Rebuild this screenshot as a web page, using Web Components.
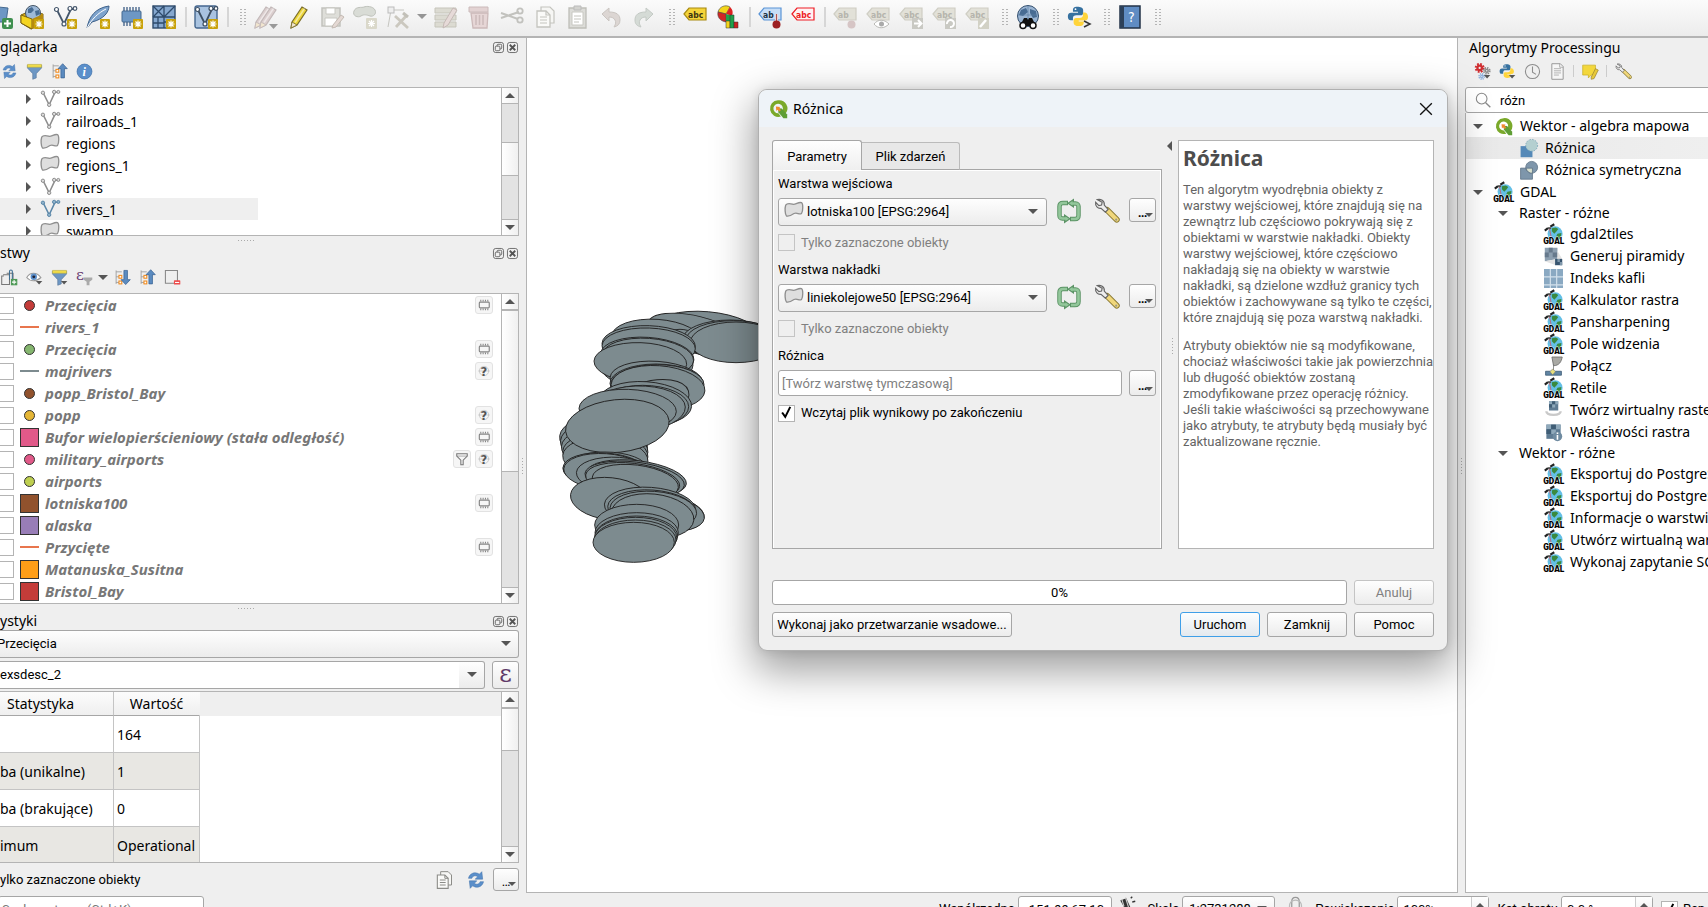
<!DOCTYPE html>
<html lang="pl">
<head>
<meta charset="utf-8">
<title>QGIS</title>
<style>
  :root {
    --ui: Roboto, "DejaVu Sans Condensed", sans-serif;
    --tree: "Noto Sans", "Open Sans", sans-serif;
    --face: #efefef;
    --line: #b4b4b4;
    --edge: #a6a6a6;
  }
  body { margin: 0; height: 100vh; overflow: hidden; background: var(--face); color: #000; font: 13px/16px var(--ui); }
</style>
</head>
<body>
<qgis-window></qgis-window>
<script>
const BASE = `
  *, *::before, *::after { box-sizing: border-box; }
  button, input, select { font: inherit; color: inherit; margin: 0; }
  button { padding: 0; border: 0; background: none; display: inline-flex; align-items: center; justify-content: center; }
  .push { border: 1px solid var(--edge); border-radius: 3px; background: linear-gradient(#fefefe, #ececec); }
  select { appearance: none; width: 100%; height: 28px; border: 1px solid var(--edge); border-radius: 3px; background: linear-gradient(#fefefe, #ececec); padding: 0 6px; }
  input[type=text], input[type=search] { border: 1px solid var(--edge); border-radius: 3px; background: #fff; padding: 0 3px; outline: 0; min-width: 0; }
  input[type=checkbox] { appearance: none; flex: none; width: 17px; height: 17px; border: 1px solid #b4b4b4; background: #fff; }
  .combo { position: relative; display: block; }
  .combo > .arrow { position: absolute; right: 8px; top: 50%; margin-top: -3px; }
  .arrow { width: 0; height: 0; border: 5px solid transparent; border-top-color: #555; border-bottom: 0; pointer-events: none; }
`;

function define(tag, css, html) {
  customElements.define(tag, class extends HTMLElement {
    connectedCallback() {
      if (this.shadowRoot) return;
      const root = this.attachShadow({ mode: 'open' });
      root.innerHTML = `<style>${BASE}${css}</style>` + (typeof html === 'function' ? html(this) : html);
    }
  });
}

/* ---------- icons, all on a 24 × 24 grid ---------- */
const star = (c = '#c9a20a') => `<rect x="14" y="14" width="10" height="10" rx="1" fill="${c}"/><path d="M19 15.500v7M15.500 19h7M16.500 16.500l5 5M21.500 16.500l-5 5" stroke="#fff" stroke-width="1.200"/>`;
const vee = (c, f = '#fff') => `<path d="M4 5l7 14 7-15h5" fill="none" stroke="${c}" stroke-width="1.800"/><g fill="${f}" stroke="${c}" stroke-width="1.200"><circle cx="3.500" cy="4.500" r="2"/><circle cx="11" cy="19" r="2"/><circle cx="17" cy="3.500" r="2"/><circle cx="22" cy="3.500" r="1.800"/></g>`;
const tag = (t, f, s, c, x = 5) => `<path d="M1 9l5-6h17v12H6z" fill="${f}" stroke="${s}" stroke-width="1.200"/><text x="${x}" y="12.500" font-family="DejaVu Sans Condensed, sans-serif" font-size="8.500" font-weight="700" fill="${c}">${t}</text>`;
const chip = c => `<rect x="4" y="7" width="17" height="10" rx="1.500" fill="none" stroke="${c}" stroke-width="2"/><path d="M6.500 3v3M10.500 3v3M14.500 3v3M18.500 3v3M6.500 18v3M10.500 18v3M14.500 18v3M18.500 18v3" stroke="${c}" stroke-width="1.800"/>`;
const drop = '<path d="M14 17h9l-4.500 5z" fill="#555"/>';
const python = '<path d="M12 2c-4 0-5 1.500-5 4v2h6v1H5c-3 0-4 2-4 4.500S2 18 4.500 18H7v-2.500C7 13 8.500 12 11 12h5c2 0 3-1 3-3V6c0-3-3-4-7-4z" transform="scale(.85)" fill="#3671a0"/><path d="M18.500 7H17v3c0 2.500-1.500 3.500-4 3.500H9c-2 0-3 1-3 3V19c0 2.500 2.500 4 6 4s6-1 6-4v-1.500h-6v-1h7.500c2.500 0 3.500-2 3.500-4.500S21.500 7 18.500 7z" transform="translate(1.500 1.500) scale(.85)" fill="#ffd43b"/><circle cx="8.500" cy="4.200" r=".9" fill="#fff"/>';
const wrench = (c = '#f0d77b') => `<path d="M12 11l9 9" stroke="#8b7b35" stroke-width="5.500" stroke-linecap="round"/><path d="M12.500 11.500l8.500 8.500" stroke="${c}" stroke-width="3.800" stroke-linecap="round"/><path d="M3 1.500c3-1 7 1 6.500 5l3.500 4-2.500 2.500-4-3.500C3.500 10 1 7.500 1.500 4l3 3 2.500-.5.500-2.500z" fill="#eee" stroke="#666" stroke-width="1.100"/><circle cx="20.500" cy="20" r="1" fill="#998"/>`;
const qlogo = '<path d="M12 1.500a10 10 0 1 0 3.500 19.500l-3-4A5.700 5.700 0 1 1 17.200 14l4 3.500A10 10 0 0 0 12 1.500z" fill="#7aa92a"/><path d="M12 11l4.500.5 6.500 7v4.500h-4.500l-6-7z" fill="#5f9e35"/><path d="M9.500 9l5 .5-1 1.500 2 2.500-2 1.500-2-2-1.500 1.500z" fill="#f08a2c"/>';
const gdal = '<circle cx="14" cy="11" r="9.500" fill="#63bfe6"/><path d="M10 4l5-1 3 2-2 3-3 3-3-3zM17 11l5-1-1 7-4 2-2-4z" fill="#3a8a3f"/><path d="M1 7l4-3M8 2l5-3" stroke="#222" stroke-width="2.800"/><path d="M5 4l4 0" stroke="#555" stroke-width="2.500"/><path d="M7 5l2 10" stroke="#c56" stroke-width="1"/><text x="-1" y="23.500" font-family="Roboto, sans-serif" font-size="10.500" font-weight="900" fill="#000" stroke="#fff" stroke-width="1" paint-order="stroke">GDAL</text>';
const refresh = '<path d="M3 10c1-5 6-8 11-6l2 1 3-3 1 9h-9l3-3c-3-2-6-1-7 2z" fill="#5b8fca" stroke="#3c6ea8" stroke-width=".6"/><path d="M21 14c-1 5-6 8-11 6l-2-1-3 3-1-9h9l-3 3c3 2 6 1 7-2z" fill="#5b8fca" stroke="#3c6ea8" stroke-width=".6"/>';
const funnel = (b = '#6d97c4') => `<path d="M2 3h20v4l-7.500 8v6l-5 2v-8L2 7z" fill="${b}" stroke="#4f6f94" stroke-width=".8"/><path d="M2 2h20v4H2z" fill="#f0dc4a" stroke="#b9a62d" stroke-width=".6"/>`;
const treeArrow = up => `<path d="M3 2v19M3 4h8M3 11h4M3 19h4" stroke="#999" stroke-width="1.200" fill="none"/><rect x="7" y="9" width="4" height="4" fill="#fff" stroke="#f08a1c" stroke-width="1.500"/><rect x="7" y="17" width="4" height="4" fill="#fff" stroke="#f08a1c" stroke-width="1.500"/>` + (up ? '<path d="M16.500 1l6.500 7h-4v13h-5V8h-4z" fill="#5b8bc0" stroke="#355f90"/>' : '<path d="M16.500 22l6.500-7h-4V2h-5v13h-4z" fill="#5b8bc0" stroke="#355f90"/>');
const page = c => `<path d="M8 2h9l4 4v12H8z" fill="#f6f6f4" stroke="${c}" stroke-width="1.200"/><path d="M4 6h9l4 4v12H4z" fill="#fafaf8" stroke="${c}" stroke-width="1.300"/><path d="M7 12h7M7 15h7M7 18h7M13 6v4h4" stroke="${c}" fill="none" stroke-width="1.200"/>`;
const gear = (x, y, r, c) => `<circle cx="${x}" cy="${y}" r="${r + 1.5}" fill="none" stroke="${c}" stroke-width="3" stroke-dasharray="${((r + 1.5) * .45).toFixed(2)} ${((r + 1.5) * .335).toFixed(2)}"/><circle cx="${x}" cy="${y}" r="${r * .8}" fill="none" stroke="${c}" stroke-width="${r * .8}"/>`;
const pencil = (f, s, dx = 0) => `<g transform="translate(${dx} 0)"><path d="M5 17L15 2l5 3-10 15-6 3z" fill="${f}" stroke="${s}" stroke-width="1.200"/><path d="M5 17l5 3-6 3z" fill="#f2e6cf" stroke="${s}" stroke-width=".8"/><path d="M8 17.500L17.500 3.500" stroke="#fff" stroke-opacity=".5" stroke-width="1.500"/></g>`;
const polygon = (f, s) => `<path d="M2 5c2-3 5-2 9-1 4 0 6-3 10-2 2 1 2 10 0 13-3 2-5-2-9 0-3 2-6 4-9 3-2-2-2-10-1-13z" fill="${f}" stroke="${s}" stroke-width="1.600"/>`;
const pixels = '<path d="M2 2h18v18H2z" fill="#5e7b93"/><path d="M2 2h6v6H2zM14 2h6v6h-6zM8 8h6v6H8z" fill="#8fa9bb"/><path d="M8 2h6v6H8zM2 8h6v6H2z" fill="#3f5d75"/>';

const ICONS = {
  addlayer: '<path d="M0 1l19 2-2 14H0z" fill="#6d97c4" stroke="#44698f"/><rect x="13" y="13" width="11" height="11" rx="2" fill="#3f8f4f"/><path d="M18.500 15v7M15 18.500h7" stroke="#fff" stroke-width="2"/>',
  package: '<path d="M1 10l9-4 13 3v10l-12 5-10-6z" fill="#d9ab18" stroke="#7c6412"/><circle cx="13" cy="8" r="7.500" fill="#9db9d8" stroke="#456"/><path d="M8 4l4-2 2 3-3 3-3 0zM15 6l4-1 1 4-4 2z" fill="#486c93"/><path d="M1 10l11 4v10l-11-6z" fill="#f4d420" stroke="#7c6412"/><path d="M12 14l11-5v10l-11 5z" fill="#b68b10"/>' + star(),
  newvector: vee('#44566b') + star(),
  feather: '<path d="M1 23C3 12 9 3 23 1c0 6-5 13-17 16z" fill="#7ea3cc" stroke="#3e618a"/><path d="M1 23C6 14 12 8 20 4" stroke="#fff" fill="none"/>' + star(),
  newchip: '<rect x="3" y="6" width="19" height="11" rx="1" fill="#6d97c4" stroke="#44698f"/><path d="M5 2v4M8 2v4M11 2v4M14 2v4M17 2v4M20 2v4M5 17v4M8 17v4M11 17v4" stroke="#3c5d85" stroke-width="1.300"/>' + star(),
  newgrid: '<rect x="1" y="1" width="22" height="22" fill="#86a8cf" stroke="#2e4a6b" stroke-width="1.400"/><path d="M12 1v22M1 12h22M1 1l11 11M12 12L23 1M1 12L12 1M6 12v11M1 18h11M12 17h11" stroke="#2e4a6b" stroke-width="1.300"/>' + star(),
  vectortool: '<rect x="1" y="1" width="22" height="22" rx="2" fill="#a9c3e0" stroke="#44668e" stroke-width="1.400"/>' + vee('#3d4f63') + star(),
  pencils: pencil('#dccfcf', '#c3b9b9', -3) + pencil('#dccfcf', '#c3b9b9', 2) + '<path d="M15 19h9l-4.500 5z" fill="#999"/>',
  pencil: pencil('#ecd536', '#7a6d2a'),
  save: '<path d="M2 3h18v18H2z" fill="#deded9" stroke="#c2c2bd" stroke-width="1.500"/><path d="M6 3h9v6H6zM5 13h12v8H5z" fill="#fff" stroke="#c8c8c2"/><path d="M13 20l8-10 3 2-8 10-4 1z" fill="#e4d9d4" stroke="#c3bab3"/>',
  addblob: '<path d="M1 6c2-5 8-3 10-4s9-1 11 3-2 7-5 6-6-2-9 0-9 0-7-5z" fill="#d9dcd6" stroke="#bfc2bb"/><rect x="13" y="13" width="11" height="11" rx="1" fill="#dad8ca"/><path d="M18.500 15v7M15 18.500h7M16 16l5 5M21 16l-5 5" stroke="#fff" stroke-width="1.200"/>',
  vertex: '<path d="M5 5L2 22M5 5h13" stroke="#c5c5c0"/><rect x="2" y="2" width="6" height="6" fill="#eee" stroke="#bbb"/><path d="M10 22l11-12M9 11l13 12" stroke="#cbc8bf" stroke-width="2.800"/><path d="M17 8l5 4" stroke="#c2c0b8" stroke-width="3"/>',
  table: '<path d="M1 3h21v5H1zM1 10h21v5H1zM1 17h21v5H1z" fill="#dcdbd2" stroke="#c6c5bb"/><path d="M10 18l9-15 4 2-9 15-5 3z" fill="#e6dad8" stroke="#c5b9b6"/>',
  trash: '<path d="M2 2h19v5H2z" fill="#e3d3d3" stroke="#cbbaba"/><path d="M4 8h17l-1 15H6z" fill="#e6d6d6" stroke="#ccb9b9" stroke-width="1.300"/><path d="M9 10v10M12.500 10v10M16 10v10" stroke="#cbb" stroke-width="1.500"/>',
  scissors: '<path d="M1 8l17 6M1 13l18-6" stroke="#c2c2be" stroke-width="2"/><circle cx="20" cy="6" r="2.700" fill="none" stroke="#c2c2be" stroke-width="1.800"/><circle cx="20" cy="15" r="2.700" fill="none" stroke="#c2c2be" stroke-width="1.800"/>',
  copy: page('#c4c4be'), copydark: page('#8c8c88'),
  paste: '<path d="M3 3h17v20H3z" fill="#dcdcd8" stroke="#bebeb8" stroke-width="1.300"/><path d="M6 7h11v13H6z" fill="#fff" stroke="#c8c8c2"/><path d="M8 1h7v4H8z" fill="#d3d3cf" stroke="#bbb"/><path d="M8 11h7M8 14h7M8 17h5" stroke="#c4c4be"/>',
  undo: '<path d="M3 9l7-6v4c8 0 11 3 11 8 0 4-2 6-6 7 2-3 2-5 1-7s-3-3-6-3v4z" fill="#dcd6d3" stroke="#cac5c1"/>',
  redo: '<path d="M21 9l-7-6v4C6 7 3 10 3 15c0 4 2 6 6 7-2-3-2-5-1-7s3-3 6-3v4z" fill="#d5dbd6" stroke="#c4cac5"/>',
  abc: tag('abc', '#f4d43a', '#a88a10', '#3b3410'),
  chart: '<path d="M10 9L2 7a8 8 0 0 1 12-5z" fill="#f3d51b" stroke="#444" stroke-width=".6"/><path d="M10 9l4-7a8 8 0 0 1 2 9z" fill="#dd2222"/><path d="M10 9l-8-2c-1 5 2 9 8 10z" fill="#cf2626" stroke="#444" stroke-width=".6"/><path d="M10 9l7 2-2 5-5 1z" fill="#1ea04a"/><path d="M10 16h4v7h-4z" fill="#f3d51b" stroke="#333" stroke-width=".5"/><path d="M14 10h4v13h-4z" fill="#1ea04a" stroke="#333" stroke-width=".5"/><path d="M18 17h4v6h-4z" fill="#c22" stroke="#333" stroke-width=".5"/>',
  abpin: tag('ab', '#c7def7', '#5a94d6', '#234') + '<path d="M18.500 9v8" stroke="#fff" stroke-width="3"/><path d="M18.500 9v8" stroke="#a55" stroke-width="1.500"/><circle cx="18.500" cy="19.500" r="4" fill="#9c1f22"/>',
  abcred: tag('abc', '#fff2f2', '#ee1c24', '#ee1c24'),
  g1: tag('ab', '#e2e1d8', '#cfcec4', '#b5b4ac') + '<circle cx="18.500" cy="19.500" r="4" fill="#d6c5c5"/>',
  g2: tag('abc', '#e2e1d8', '#cfcec4', '#b5b4ac') + '<path d="M8 19c4-5 10-5 15 0-5 5-11 5-15 0z" fill="#fff" stroke="#b9b9b5"/><circle cx="15.500" cy="19" r="2.500" fill="#aaa"/>',
  g3: tag('abc', '#e2e1d8', '#cfcec4', '#b5b4ac') + '<rect x="13" y="13" width="11" height="11" fill="#c9c9c3"/><path d="M15 18.500h7M19 15l3.500 3.500L19 22" stroke="#fff" stroke-width="2" fill="none"/>',
  g4: tag('abc', '#e2e1d8', '#cfcec4', '#b5b4ac') + '<rect x="13" y="13" width="11" height="11" fill="#c9c9c3"/><path d="M18 22a3.500 3.500 0 1 0-3-3" stroke="#fff" stroke-width="2" fill="none"/>',
  g5: tag('abc', '#e2e1d8', '#cfcec4', '#b5b4ac') + '<rect x="13" y="13" width="11" height="11" fill="#d2d1c5"/><path d="M15 22l6-7" stroke="#fff" stroke-width="2.500"/>',
  globe: '<circle cx="12" cy="11" r="10.500" fill="#9ab5d3" stroke="#34506f"/><path d="M5 5l5-2 2 4-5 4-4-1zM14 4l6 2 1 6-4 1-3-5z" fill="#486c93"/><path d="M2 10h20M12 1v20" stroke="#5c7ea5" stroke-width=".7"/><path d="M8 13h3l1 2 1-2h3l4 8H4z" fill="#111"/><circle cx="7" cy="20.500" r="3" fill="#fff" stroke="#111" stroke-width="1.500"/><circle cx="17" cy="20.500" r="3" fill="#fff" stroke="#111" stroke-width="1.500"/>',
  python: python + '<path d="M17 16l6 3-6 3" fill="none" stroke="#333" stroke-width="1.500"/>',
  pydrop: python + drop,
  book: '<path d="M2 1h20v22H2z" fill="#5f8cc3" stroke="#223247" stroke-width="1.500"/><path d="M2 1h4v22H2z" fill="#2c4059"/><text x="10" y="17" font-family="DejaVu Sans Condensed, sans-serif" font-size="14" fill="#fff">?</text>',
  refresh, funnel: funnel(), collapse: treeArrow(true), expand: treeArrow(false),
  info: '<circle cx="12" cy="12" r="10.500" fill="#5b8fca" stroke="#3c6ea8"/><text x="9" y="18" font-family="Liberation Serif, serif" font-style="italic" font-weight="700" font-size="17" fill="#fff">i</text>',
  vector: vee('#8d8d8d', '#ddd'), vectorblue: vee('#5b87a8', '#8fb3cc'),
  polygon: polygon('#dedede', '#8f8f8f'),
  addgroup: '<path d="M3 8h9v14H1V10h3M8 6h9v13" fill="none" stroke="#777" stroke-width="1.500"/><path d="M12 15V3c0-2 4-2 4 0v12" fill="none" stroke="#3f6f93" stroke-width="1.500"/><rect x="14" y="14" width="9" height="9" fill="#4f9a57"/><path d="M18.500 15.500v6M15.500 18.500h6" stroke="#fff" stroke-width="1.500"/>',
  eye: '<path d="M1 12C6 4 15 4 21 12 15 18 6 18 1 12z" fill="#fff" stroke="#999" stroke-width="1.500"/><circle cx="11" cy="11" r="4.500" fill="#5b8fca"/><circle cx="11" cy="11" r="2" fill="#223"/>' + drop,
  funneldrop: funnel() + drop,
  epsfilter: '<text x="0" y="15" font-family="DejaVu Serif, Liberation Serif, serif" font-size="22" fill="#6a3f74">ε</text><path d="M11 12h12v3l-4 3v5h-4v-5l-4-3z" fill="#aaa"/>',
  removebox: '<path d="M2 2h17v18H2z" fill="none" stroke="#888" stroke-width="1.500"/><rect x="14" y="16" width="9" height="6" rx="1" fill="#ee4b4b"/><path d="M15.500 19h6" stroke="#fff" stroke-width="1.500"/>',
  epsilon: '<text x="4" y="20" font-family="DejaVu Serif, Liberation Serif, serif" font-size="29" fill="#5f3a68">ε</text>',
  chip: chip('#858585'),
  query: '<circle cx="12" cy="12" r="8" fill="none" stroke="#bbb" stroke-width="1.200"/><path d="M2 12h20" stroke="#bbb"/><text x="6" y="20" font-family="DejaVu Sans, sans-serif" font-weight="700" font-size="20" fill="#555">?</text>',
  funnelline: '<path d="M3 3h18v4l-7 7v8h-4v-8L3 7z" fill="none" stroke="#777" stroke-width="1.800"/><path d="M3 7h18" stroke="#777"/>',
  float: '<rect x="1" y="1" width="22" height="22" rx="5" fill="none" stroke="#666" stroke-width="2"/><rect x="9" y="5" width="10" height="10" rx="2" fill="none" stroke="#666" stroke-width="2"/><rect x="5" y="9" width="10" height="10" rx="2" fill="#efefef" stroke="#666" stroke-width="2"/>',
  closebox: '<rect x="1" y="1" width="22" height="22" rx="5" fill="none" stroke="#666" stroke-width="2"/><path d="M6 6l12 12M18 6L6 18" stroke="#555" stroke-width="4"/>',
  qlogo, gdal, wrench: wrench(),
  iterate: '<path d="M11 4H6C3.500 4 2.500 5 2.500 7.500v9c0 1.500 1 3 3 3h2" fill="none" stroke="#5c9466" stroke-width="4.500"/><path d="M13 20h5c2.500 0 3.500-1 3.500-3.500v-9c0-1.500-1-3-3-3h-2" fill="none" stroke="#5c9466" stroke-width="4.500"/><path d="M7 15l7 4.700-7 4.800zM17-.5v9.500l-7-4.700z" fill="#5c9466"/><path d="M10 4H6C3.500 4 2.500 5 2.500 7.500v9c0 1.500 1 3 3 3h4M14 20h4c2.500 0 3.500-1 3.500-3.500v-9c0-1.500-1-3-3-3h-4" fill="none" stroke="#93c79b" stroke-width="2.600"/><path d="M8.500 17.500l3.500 2.200-3.500 2.300zM15.500 2v4.500L12 4.300z" fill="#93c79b"/>',
  gears: gear(8, 7, 4, '#cf2e31') + gear(18, 11, 2.5, '#8a8a8a') + gear(11, 19, 2, '#8fb0dc') + drop,
  clock: '<circle cx="12" cy="12" r="10" fill="none" stroke="#8c8c8c" stroke-width="1.500"/><path d="M12 5v8l5 3" fill="none" stroke="#8c8c8c" stroke-width="1.500"/>',
  doc: '<path d="M4 1h12l4 4v18H4z" fill="#f6f6f6" stroke="#999" stroke-width="1.400"/><path d="M7 8h10M7 11h10M7 14h10M7 17h7M15 1v5h5" stroke="#999" fill="none"/>',
  note: '<path d="M1 3h18v14h-6l-4 4v-4H1z" fill="#f3d73c" stroke="#c8ae20"/><path d="M13 20l6-12 4 2-6 12-4 1z" fill="#e7c93a" stroke="#998433"/>',
  magnifier: '<circle cx="10" cy="10" r="8" fill="none" stroke="#888" stroke-width="1.600"/><path d="M16 16l7 7" stroke="#888" stroke-width="2"/>',
  difference: '<path d="M2 9h15v14H2z" fill="#5589b8"/><circle cx="16" cy="8" r="7.500" fill="#b4cfd0" stroke="#6c9db3" stroke-dasharray="2 1.500"/>',
  symdiff: '<path d="M2 9h15v14H2z" fill="#7e96ab" stroke="#5c7285"/><circle cx="16" cy="8" r="7.500" fill="#7e96ab" stroke="#5c7285"/><path d="M9 9h8v6.400A7.500 7.500 0 0 1 9 9z" fill="#d9e0cf" stroke="#5c7285"/>',
  pyramid: '<path d="M1 1h16v14L1 18z" fill="#8c9fb0"/><path d="M6 1h5v6H6zM1 7h5v6H1zM11 7h6v6h-6z" fill="#66798c"/><path d="M17 5l6 10-8 8-14-5 16-3z" fill="#e3e3e3"/><path d="M14 15h9v8h-9z" fill="#38556f"/><path d="M17 15h3v4h-3zM20 19h3v4h-3z" fill="#7f97aa"/>',
  tiles: '<path d="M0 0h24v24H0z" fill="#8aa9c2"/><path d="M8 0v24M16 0v24M0 10h24M0 20h24" stroke="#d3e1ec" stroke-width="1.500"/>',
  merge: '<path d="M10 0h13c-1 6-4 11-11 11z" fill="#a9a9a4" stroke="#666"/><path d="M12 9v9" stroke="#777"/><path d="M2 18h20v5H2z" fill="#6185a3" stroke="#3c5a74"/><path d="M11 15l3.500 3.500-3.500 4-3.500-4z" fill="#e9e07c" stroke="#777" stroke-width=".7"/>',
  virtual: '<path d="M3 13c0 6 18 6 18 0" fill="none" stroke="#c9c9c9" stroke-width="3"/><g transform="translate(5 -1) scale(.65)">' + pixels + '</g>',
  rasterinfo: '<g transform="translate(1 0)">' + pixels + '</g><circle cx="17" cy="17" r="6" fill="#6f8ba1"/><path d="M17 15v6M17 12v2" stroke="#fff" stroke-width="2"/>',
  tracking: '<path d="M3 6l8 14 6-4-6-13z" fill="#333"/><path d="M5 4l3 10M10 2l4 13" stroke="#ccc" stroke-width="1.500"/><path d="M17 3l2-2M19 8l4-1M17 18l4 3" stroke="#333" stroke-width="1.800"/>',
  lock: '<path d="M6 24V9c0-9 12-9 12 0v15" fill="none" stroke="#999" stroke-width="2"/><path d="M3 20C-2 2 26 2 21 20" fill="none" stroke="#bbb" stroke-width="2"/>',
  check: '<path d="M5 12l5 7 8-16" fill="none" stroke="#000" stroke-width="3.200"/>',
  cross: '<path d="M2 2l20 20M22 2L2 22" stroke="#111" stroke-width="2.300"/>'
};

customElements.define('q-icon', class extends HTMLElement {
  connectedCallback() {
    if (this.shadowRoot) return;
    const s = this.getAttribute('size') || 24;
    this.attachShadow({ mode: 'open' }).innerHTML =
      `<style>:host{display:block;flex:none;width:${s}px;height:${s}px}svg{display:block;width:100%;height:100%;overflow:visible}</style><svg viewBox="0 0 24 24" aria-hidden="true">${ICONS[this.getAttribute('name')]}</svg>`;
  }
});
const icon = (n, s = 24) => `<q-icon name="${n}" size="${s}"></q-icon>`;

/* ---------- toolbar ---------- */
const TOOLS = 'addlayer package newvector feather newchip newgrid | vectortool | : pencils pencil save addblob vertex v table trash scissors copy paste undo redo : abc chart | abpin abcred | g1 g2 g3 g4 g5 : globe : python : book :'.split(' ');
define('main-toolbar', `
  :host { display: flex; align-items: center; gap: 5px; height: 38px; padding-bottom: 3px; overflow: hidden; border-bottom: 2px solid var(--line); background: linear-gradient(#fbfbfb, #ececec); }
  button { flex: none; width: 28px; height: 28px; }
  button:first-of-type { width: 13px; justify-content: flex-end; }
  .sep { flex: none; width: 4px; height: 20px; border-right: 2px solid #d6d6d6; }
  .grip { flex: none; width: 8px; height: 18px; margin-left: 5px; background: radial-gradient(circle, #b4b4b4 0 1px, transparent 1px) 0 0 / 4px 3px; }
`, TOOLS.map(t => t === '|' ? '<span class="sep"></span>' : t === ':' ? '<span class="grip"></span>' : t === 'v' ? '<span class="arrow" style="opacity:.6"></span>' : `<button type="button" aria-label="${t}">${icon(t)}</button>`).join(''));

/* ---------- scroll bar ---------- */
define('scroll-bar', `
  :host { display: flex; flex-direction: column; flex: none; width: 17px; border-left: 1px solid var(--line); background: #e3e3e3; }
  button { flex: none; height: 16px; background: linear-gradient(90deg, #fff, #f0f0f0); }
  .thumb { background: linear-gradient(90deg, #fff, #f0f0f0); border: 1px solid var(--line); border-width: 1px 0; }
  button:first-of-type { border-bottom: 1px solid var(--line); }
  button:last-child { border-top: 1px solid var(--line); }
  .up { transform: rotate(180deg); }
`, h => {
  const [a, b, c] = h.getAttribute('parts').split(' ');
  return `<button type="button" aria-label="Góra"><span class="arrow up"></span></button><span style="flex:${a}"></span><span class="thumb" style="flex:${b}"></span><span style="flex:${c}"></span><button type="button" aria-label="Dół"><span class="arrow"></span></button>`;
});

/* ---------- dock frame ---------- */
define('dock-panel', `
  :host { display: flex; flex-direction: column; min-height: 0; min-width: 0; overflow: hidden; }
  header { display: flex; align-items: center; gap: 3px; flex: none; height: 18px; padding-right: 1px; font: 14px/18px var(--tree); white-space: nowrap; }
  h2 { flex: 1; margin: 0; font: inherit; }
  :host([pad]) h2 { padding: 2px 0 0 4px; }
`, h => `<header><h2>${h.getAttribute('heading')}</h2>${h.hasAttribute('pad') ? '' : `<button type="button" aria-label="Odepnij">${icon('float', 11)}</button><button type="button" aria-label="Zamknij">${icon('closebox', 11)}</button>`}</header><slot></slot>`);

define('tool-row', `
  :host { display: flex; align-items: center; gap: 7px; flex: none; height: 28px; margin-bottom: 3px; padding-top: 2px; }
  .sep { width: 1px; height: 12px; background: #ccc; }
  .arrow { margin: 0 -2px; }
  button { width: 18px; }
`, h => h.getAttribute('items').split(' ').map(t => t === '|' ? '<span class="sep"></span>' : t === 'v' ? '<span class="arrow"></span>' : `<button type="button" aria-label="${t}">${icon(t, 17)}</button>`).join(''));

/* ---------- browser tree ---------- */
define('browser-tree', `
  :host { display: flex; flex: 1; min-height: 0; border: 1px solid var(--line); border-left: 0; background: #fff; }
  ul { flex: 1; margin: 0; padding: 0; list-style: none; overflow: hidden; font: 14px/20px var(--tree); }
  li { display: flex; align-items: center; height: 22px; width: 258px; padding-left: 26px; }
  li.on { background: var(--face); }
  i { border: 5px solid transparent; border-left-color: #555; border-right: 0; margin-right: 9px; }
  q-icon { margin-right: 6px; }
  span { padding-top: 2px; }
`, '<ul>' + [['railroads', 'vector'], ['railroads_1', 'vector'], ['regions', 'polygon'], ['regions_1', 'polygon'], ['rivers', 'vector'], ['rivers_1', 'vectorblue'], ['swamp', 'polygon']].map(([t, i]) => `<li${t === 'rivers_1' ? ' class="on"' : ''}><i></i>${icon(i, 20)}<span>${t}</span></li>`).join('') + '</ul><scroll-bar parts="38 33 43"></scroll-bar>');

/* ---------- layer list ---------- */
const LAYERS = [
  ['Przecięcia', 'dot', '#c43c39', 'chip'], ['rivers_1', 'ln', '#e8754d', ''], ['Przecięcia', 'dot', '#85b66f', 'chip'],
  ['majrivers', 'ln', '#7d8b8f', 'query'], ['popp_Bristol_Bay', 'dot', '#91522d', ''], ['popp', 'dot', '#e5b636', 'query'],
  ['Bufor wielopierścieniowy (stała odległość)', 'sq', '#e15989', 'chip'], ['military_airports', 'dot', '#e15989', 'funnelline query'],
  ['airports', 'dot', '#becf50', ''], ['lotniska100', 'sq', '#91522d', 'chip'], ['alaska', 'sq', '#987db7', ''],
  ['Przycięte', 'ln', '#e8754d', 'chip'], ['Matanuska_Susitna', 'sq', '#ff9e17', ''], ['Bristol_Bay', 'sq', '#c43c39', '']
];
define('layer-list', `
  :host { display: flex; flex: 1; min-height: 0; border: 1px solid var(--line); border-left: 0; background: #fff; }
  ul { flex: 1; min-width: 0; margin: 0; padding: 0; list-style: none; overflow: hidden; }
  li { display: flex; align-items: center; height: 22px; padding-right: 8px; gap: 4px; }
  label { display: flex; align-items: center; flex: 1; margin-left: -3px; font: italic 700 15px/22px var(--tree); color: #777; white-space: nowrap; }
  .sym { flex: none; display: flex; align-items: center; justify-content: center; width: 19px; height: 19px; margin: 0 6px; }
  .dot::before { content: ""; width: 11px; height: 11px; border: 1px solid #333; border-radius: 50%; background: var(--c); }
  .ln::before { content: ""; width: 100%; height: 2px; background: var(--c); }
  .sq { border: 1px solid #333; background: var(--c); }
  .badge { display: flex; align-items: center; justify-content: center; width: 18px; height: 18px; border: 1px solid #e2e2e2; border-radius: 3px; background: #f6f6f6; }
`, '<ul>' + LAYERS.map(([t, k, c, b]) => `<li><label><input type="checkbox"><span class="sym ${k}" style="--c:${c}"></span>${t}</label>${b ? b.split(' ').map(n => `<span class="badge">${icon(n, 14)}</span>`).join('') : ''}</li>`).join('') + '</ul><scroll-bar parts="0 161 115"></scroll-bar>');

/* ---------- statistics ---------- */
define('stats-view', `
  :host { display: flex; flex-direction: column; flex: 1; min-height: 0; }
  select { padding-left: 0; border-left: 0; border-radius: 0 3px 3px 0; }
  .first select { text-indent: -3px; }
  .expr { display: flex; gap: 7px; margin: 3px 0 2px; }
  .expr .combo { flex: 1; }
  .expr select { background: linear-gradient(#fefefe, #ececec) right / 25px 100% no-repeat #fff; }
  .expr button { width: 27px; }
  .view { display: flex; flex: 1; min-height: 0; border: 1px solid var(--line); border-left: 0; background: #fff; }
  .grid { flex: 1; overflow: hidden; background: linear-gradient(var(--face) 24px, #fff 24px); }
  table { width: 200px; border-collapse: separate; border-spacing: 0; table-layout: fixed; font: 14px/18px var(--tree); }
  th, td { padding: 1px 0 0 3px; border-right: 1px solid #c4c4c4; border-bottom: 1px solid #c4c4c4; text-align: left; white-space: nowrap; font-weight: 400; }
  th { height: 24px; text-align: center; background: linear-gradient(#fcfcfc, #efefef); border-bottom-color: var(--edge); }
  th:first-child { width: 114px; padding: 1px 32px 0 0; }
  th:last-child { border-right-color: transparent; padding-left: 0; }
  td { height: 37px; }
  td:first-child { padding-left: 0; }
  tr:nth-child(even) td { background: #e8e7e3; }
  footer { display: flex; align-items: center; flex: none; margin: 5px 0 2px; gap: 7px; }
  footer label { flex: 1; }
  footer .more { position: relative; width: 26px; height: 23px; align-items: flex-end; }
  .more .arrow { position: absolute; right: 2px; bottom: 4px; border-width: 4px; border-bottom: 0; }
  footer .pair { display: flex; gap: 12px; }
`, `
  <label class="combo first"><select><option>Przecięcia</option></select><span class="arrow"></span></label>
  <div class="expr"><label class="combo"><select><option>exsdesc_2</option></select><span class="arrow"></span></label><button type="button" class="push" aria-label="Wyrażenie">${icon('epsilon', 20)}</button></div>
  <div class="view"><div class="grid"><table>
    <thead><tr><th>Statystyka</th><th>Wartość</th></tr></thead>
    <tbody><tr><td></td><td>164</td></tr><tr><td>ba (unikalne)</td><td>1</td></tr><tr><td>ba (brakujące)</td><td>0</td></tr><tr><td>imum</td><td>Operational</td></tr></tbody>
  </table></div><scroll-bar parts="0 41 96"></scroll-bar></div>
  <footer><label>ylko zaznaczone obiekty</label><span class="pair"><button type="button" aria-label="Kopiuj">${icon('copydark', 20)}</button><button type="button" aria-label="Odśwież">${icon('refresh', 20)}</button></span><button type="button" class="push more">…<span class="arrow"></span></button></footer>
`);

/* ---------- map canvas ---------- */
const BUFFERS = [
  [500, 126, 160, 61, 5], [470, 134, 150, 55, 14], [350, 148, 136, 60, 4], [420, 160, 60, 42, 0], [570, 148, 142, 58, 0], [580, 150, 142, 58, 0], [588, 157, 137, 61, 0],
  [318, 232, 134, 60, 0], [325, 225, 134, 60, 0],
  [326, 165, 140, 58, 2], [326, 172, 140, 58, 2], [322, 200, 140, 58, 4], [324, 203, 137, 58, 4], [301, 218, 139, 60, 2],
  [350, 272, 140, 58, 4], [348, 280, 138, 58, 0], [352, 284, 140, 60, 0], [354, 293, 141, 66, 4],
  [315, 345, 137, 67, -18], [316, 340, 139, 65, 4], [308, 350, 138, 64, 0], [290, 356, 146, 68, -2], [263, 360, 146, 62, 2],
  [190, 455, 132, 70, 8], [192, 465, 131, 68, 6], [194, 478, 130, 64, 4], [196, 492, 128, 62, 4], [196, 505, 128, 62, 4],
  [232, 408, 156, 79, -6],
  [195, 536, 126, 50, 0], [196, 541, 127, 52, 4], [196, 545, 125, 54, 4], [235, 556, 126, 54, 4],
  [290, 564, 150, 52, 7], [284, 568, 150, 52, 7], [278, 572, 142, 52, 7], [286, 577, 130, 52, 7],
  [210, 626, 119, 63, 6],
  [375, 670, 118, 53, 6], [370, 668, 124, 54, 8], [330, 652, 137, 60, 4], [335, 658, 132, 58, 4], [340, 662, 130, 58, 4], [338, 678, 124, 66, 6],
  [290, 705, 126, 62, 0], [290, 728, 125, 60, 0], [289, 738, 124, 60, 0], [287, 742, 123, 60, 0], [286, 750, 122, 60, 0], [281, 757, 122, 60, 0]
];
define('map-canvas', `
  :host { display: block; position: relative; min-width: 0; overflow: hidden; background: #fff; border: 1px solid var(--line); border-top: 0; }
  svg { position: absolute; left: 13px; top: 252px; width: 280px; height: 290px; }
`, `<svg viewBox="0 0 840 870" fill="#7d8b8f" stroke="#232323" stroke-width="2.800" aria-hidden="true">${BUFFERS.map(([x, y, a, b, r]) => `<ellipse cx="${x}" cy="${y}" rx="${a}" ry="${b}" transform="rotate(${r} ${x} ${y})"/>`).join('')}</svg>`);

/* ---------- processing toolbox ---------- */
const ALGS = [
  [0, 'qlogo', 'Wektor - algebra mapowa'], [1, 'difference', 'Różnica'], [1, 'symdiff', 'Różnica symetryczna'], [0, 'gdal', 'GDAL'],
  [2, '', 'Raster - różne'], [3, 'gdal', 'gdal2tiles'], [3, 'pyramid', 'Generuj piramidy'], [3, 'tiles', 'Indeks kafli'], [3, 'gdal', 'Kalkulator rastra'],
  [3, 'gdal', 'Pansharpening'], [3, 'gdal', 'Pole widzenia'], [3, 'merge', 'Połącz'], [3, 'gdal', 'Retile'], [3, 'virtual', 'Twórz wirtualny raster'],
  [3, 'rasterinfo', 'Właściwości rastra'], [2, '', 'Wektor - różne'], [3, 'gdal', 'Eksportuj do PostgreSQL'], [3, 'gdal', 'Eksportuj do PostgreSQL'],
  [3, 'gdal', 'Informacje o warstwie'], [3, 'gdal', 'Utwórz wirtualną warstwę'], [3, 'gdal', 'Wykonaj zapytanie SQL']
];
define('processing-toolbox', `
  :host { display: flex; flex-direction: column; flex: 1; min-height: 0; }
  tool-row { padding-left: 8px; }
  .search { display: flex; align-items: center; flex: none; height: 26px; margin-right: -4px; padding-left: 9px; gap: 6px; border: 1px solid var(--edge); border-radius: 3px; background: #fff; }
  .search input { border: 0; height: 22px; flex: 1; }
  ul { flex: 1; margin: 0; padding: 2px 0 0; list-style: none; border: 1px solid var(--line); border-width: 0 0 1px 1px; background: #fff; overflow: hidden; font: 14px/22px var(--tree); }
  li { display: flex; align-items: center; height: 22px; white-space: nowrap; padding-left: 7px; }
  li q-icon { margin-right: 7px; }
  li .arrow { margin-right: 11px; }
  li.l1 { padding-left: 53px; }
  li.l2 { padding-left: 32px; height: 20px; }
  li.l3 { padding-left: 78px; }
  li.on { background: linear-gradient(90deg, #e9e9e9, #efefef); }
`, `<tool-row items="gears pydrop clock doc | note | wrench"></tool-row>
  <label class="search">${icon('magnifier', 16)}<input type="search" value="różn" aria-label="Szukaj"></label>
  <ul>${ALGS.map(([l, i, t], n) => `<li class="l${l}${n === 1 ? ' on' : ''}">${l % 2 ? '' : '<span class="arrow"></span>'}${i ? icon(i, 19) : ''}<span>${t}</span></li>`).join('')}</ul>`);

/* ---------- status bar ---------- */
define('status-bar', `
  :host { display: flex; align-items: flex-start; height: 14px; overflow: hidden; padding-top: 3px; white-space: nowrap; }
  :host > * { flex: none; }
  label { line-height: 26px; }
  input[type=text], select, .spin { height: 26px; }
  .find { width: 206px; margin-left: -2px; padding-left: 8px; }
  .find::placeholder { color: #777; }
  .gap { flex: 1; }
  .right { display: flex; align-items: flex-start; }
  .right > * { flex: none; }
  .right label { margin-right: 3px; }
  .xy { width: 94px; margin-right: 6px; text-align: center; }
  .right .combo { width: 93px; margin: 0 13px 0 0; }
  .spin { display: flex; width: 92px; margin-right: 8px; border: 1px solid var(--edge); border-radius: 3px; background: #fff; }
  .spin input[type=text] { width: 73px; height: 24px; border: 0; padding-left: 5px; }
  .spin span { width: 17px; border-left: 1px solid #ccc; background: linear-gradient(#fefefe, #ececec); display: flex; justify-content: center; padding-top: 6px; }
  .arrow.up { transform: rotate(180deg); height: 5px; }
  .tick { position: relative; margin: 5px 5px 0 0; width: 17px; height: 17px; }
  .tick q-icon { position: absolute; left: 1px; top: 1px; }
  .lead { margin-left: 12px; }
`, `<input class="find" type="text" placeholder="Szukane trasa (Ctrl+K)" aria-label="Szukaj"><span class="gap"></span>
  <div class="right"><label for="xy">Współrzędne</label><input id="xy" class="xy" type="text" value="-151.99,67.10">${icon('tracking', 18)}
  <label for="sc" class="lead">Skala</label><span class="combo"><select id="sc"><option>1:2731288</option></select><span class="arrow"></span></span>${icon('lock', 15)}
  <label for="zo" class="lead">Powiększenie</label><span class="spin"><input id="zo" type="text" value="100%"><span><i class="arrow up"></i></span></span>
  <label for="ro">Kąt obrotu</label><span class="spin"><input id="ro" type="text" value="0.0 °"><span><i class="arrow up"></i></span></span>
  <span class="tick"><input type="checkbox" id="re" checked>${icon('check', 15)}</span><label for="re">Ren</label></div>`);

/* ---------- algorithm dialog ---------- */
const source = (id, label, value) => `
  <label class="cap" for="${id}">${label}</label>
  <div class="line"><span class="combo"><select id="${id}"><option>${value}</option></select>${icon('polygon', 20)}<span class="arrow"></span></span>
    <button type="button" class="tool" aria-label="Iteruj">${icon('iterate', 24)}</button><button type="button" class="tool" aria-label="Opcje">${icon('wrench', 26)}</button>
    <button type="button" class="push more">…<span class="arrow"></span></button></div>
  <label class="chk off"><input type="checkbox" disabled>Tylko zaznaczone obiekty</label>`;
define('algorithm-dialog', `
  :host { position: absolute; left: 758px; top: 89px; z-index: 5; display: flex; flex-direction: column; width: 690px; height: 562px; border: 1px solid #b0b0b0; border-radius: 9px; overflow: hidden; background: var(--face); box-shadow: 0 0 10px rgba(0,0,0,.1), 0 16px 42px 4px rgba(0,0,0,.38); }
  header { display: flex; align-items: center; flex: none; height: 37px; padding: 0 14px 0 9px; gap: 5px; background: #eef3f8; font: 14px/18px var(--tree); }
  header h1 { flex: 1; margin: 0; font: inherit; }
  .body { display: flex; flex: 1; min-height: 0; padding: 13px 13px 0; }
  .form { flex: 1; display: flex; flex-direction: column; min-width: 0; }
  .tabs { display: flex; align-items: flex-end; height: 30px; margin-bottom: -1px; z-index: 1; }
  .tabs button { height: 28px; width: 98px; padding-top: 2px; border: 1px solid #bbb; border-left: 0; border-bottom-color: var(--edge); border-radius: 0 3px 0 0; background: #e8e8e8; }
  .tabs button.on { height: 30px; width: 90px; border: 1px solid var(--edge); border-bottom: 0; border-radius: 3px 3px 0 0; background: linear-gradient(#fefefe, var(--face)); }
  .page { flex: 1; border: 1px solid var(--edge); box-shadow: inset 1px 1px #fff, inset -1px 0 #fff; padding: 4px 5px; display: flex; flex-direction: column; align-items: stretch; }
  .cap { display: block; line-height: 20px; margin-bottom: 4px; }
  .line { display: flex; align-items: flex-start; }
  .line .combo { flex: 1; margin-right: 9px; }
  .line select { padding-left: 28px; }
  .combo q-icon { position: absolute; left: 6px; top: 3px; }
  .combo > .arrow { right: 9px; }
  .tool { width: 26px; height: 26px; margin-right: 12px; }
  .tool + .tool { margin-right: 9px; }
  .line input { flex: 1; height: 26px; margin-right: 7px; }
  .line input::placeholder { color: #808080; }
  .more { position: relative; width: 27px; height: 24px; padding-top: 5px; font-weight: 700; }
  .more.tall { height: 26px; }
  .more .arrow { position: absolute; right: 2px; bottom: 4px; border-width: 4px; border-bottom: 0; }
  .chk { position: relative; display: flex; align-items: center; gap: 6px; margin: 8px 0 9px; height: 18px; }
  .chk q-icon { position: absolute; left: 1px; top: 1px; }
  .off { color: #808080; height: 17px; }
  .off input[type=checkbox] { background: transparent; border-color: #c4c4c4; }
  .mid { width: 16px; display: flex; flex-direction: column; align-items: center; padding-top: 1px; }
  .mid i { border: 5px solid transparent; border-right-color: #555; border-left: 0; margin-right: 2px; }
  .mid b { width: 1px; height: 16px; margin: 187px 0 0 4px; background: repeating-linear-gradient(#aaa 0 1px, transparent 1px 3px); }
  article { flex: none; width: 256px; padding: 5px 4px; border: 1px solid var(--line); background: #fff; color: #646464; white-space: nowrap; overflow: hidden; }
  h3 { margin: 0 0 12px; font: 700 21px/24px var(--tree); color: #4d4d4d; }
  p { margin: 0 0 12px; }
  .foot { display: grid; grid-template-columns: 1fr 80px 80px 80px; gap: 7px; padding: 31px 13px 13px; }
  .foot > * { height: 25px; }
  .bar { grid-column: 1 / 4; display: flex; align-items: center; justify-content: center; border: 1px solid var(--edge); border-radius: 3px; background: #fff; }
  .batch { justify-self: start; width: 240px; }
  .main { border-color: #3f9fe8; background: linear-gradient(#fbfdfe, #e4e9ee); }
  .dim { color: #808080; border-color: #c4c4c4; }
`, `<header>${icon('qlogo', 20)}<h1>Różnica</h1><button type="button" aria-label="Zamknij">${icon('cross', 14)}</button></header>
  <div class="body"><section class="form"><div class="tabs"><button type="button" class="on">Parametry</button><button type="button">Plik zdarzeń</button></div>
    <div class="page">${source('inp', 'Warstwa wejściowa', 'lotniska100 [EPSG:2964]')}${source('ovl', 'Warstwa nakładki', 'liniekolejowe50 [EPSG:2964]')}
      <label class="cap" for="out">Różnica</label>
      <div class="line"><input id="out" type="text" placeholder="[Twórz warstwę tymczasową]"><button type="button" class="push more tall">…<span class="arrow"></span></button></div>
      <label class="chk"><input type="checkbox" checked>${icon('check', 15)}Wczytaj plik wynikowy po zakończeniu</label>
    </div></section>
    <div class="mid"><i></i><b></b></div>
    <article><h3>Różnica</h3>
      <p>Ten algorytm wyodrębnia obiekty z<br>warstwy wejściowej, które znajdują się na<br>zewnątrz lub częściowo pokrywają się z<br>obiektami w warstwie nakładki. Obiekty<br>warstwy wejściowej, które częściowo<br>nakładają się na obiekty w warstwie<br>nakładki, są dzielone wzdłuż granicy tych<br>obiektów i zachowywane są tylko te części,<br>które znajdują się poza warstwą nakładki.</p>
      <p>Atrybuty obiektów nie są modyfikowane,<br>chociaż właściwości takie jak powierzchnia<br>lub długość obiektów zostaną<br>zmodyfikowane przez operację różnicy.<br>Jeśli takie właściwości są przechowywane<br>jako atrybuty, te atrybuty będą musiały być<br>zaktualizowane ręcznie.</p></article></div>
  <div class="foot"><div class="bar" role="progressbar" aria-valuenow="0">0%</div><button type="button" class="push dim" disabled>Anuluj</button>
    <button type="button" class="push batch">Wykonaj jako przetwarzanie wsadowe...</button><button type="button" class="push main">Uruchom</button><button type="button" class="push">Zamknij</button><button type="button" class="push">Pomoc</button></div>`);

/* ---------- window ---------- */
define('qgis-window', `
  :host { display: grid; grid-template-rows: auto minmax(0, 1fr) auto; height: 100%; }
  main { display: grid; grid-template-columns: 519px 7px minmax(0, 1fr) 7px 243px; min-height: 0; }
  .left { display: grid; grid-template-rows: 198fr 8px 360fr 8px 281fr; min-height: 0; min-width: 0; }
  .split { display: flex; align-items: center; justify-content: center; }
  .h::before { content: ""; width: 16px; height: 1px; margin-right: 28px; background: repeating-linear-gradient(90deg, #aaa 0 1px, transparent 1px 3px); }
  .v::before { content: ""; width: 1px; height: 16px; background: repeating-linear-gradient(#aaa 0 1px, transparent 1px 3px); }
`, `<main-toolbar></main-toolbar>
  <main>
    <div class="left">
      <dock-panel heading="glądarka"><tool-row items="refresh funnel collapse info"></tool-row><browser-tree></browser-tree></dock-panel>
      <div class="split h"></div>
      <dock-panel heading="stwy"><tool-row items="addgroup eye funneldrop epsfilter v expand collapse removebox"></tool-row><layer-list></layer-list></dock-panel>
      <div class="split h"></div>
      <dock-panel heading="ystyki"><stats-view></stats-view></dock-panel>
    </div>
    <div class="split v"></div>
    <map-canvas></map-canvas>
    <div class="split v"></div>
    <dock-panel pad heading="Algorytmy Processingu"><processing-toolbox></processing-toolbox></dock-panel>
  </main>
  <status-bar></status-bar>
  <algorithm-dialog></algorithm-dialog>`);
</script>
</body>
</html>
